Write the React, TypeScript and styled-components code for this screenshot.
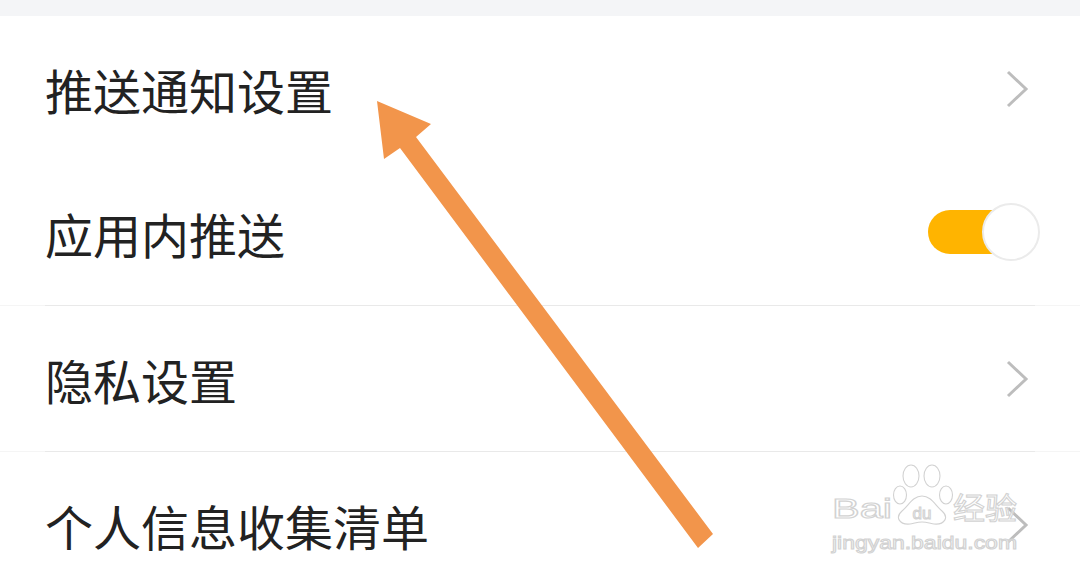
import React from 'react';
import styled, { createGlobalStyle } from 'styled-components';

const GlobalStyle = createGlobalStyle`
  html, body {
    margin: 0;
    padding: 0;
    background: #ffffff;
  }
  body {
    font-family: "Noto Sans CJK SC", "Noto Sans", sans-serif;
    overflow: hidden;
  }
`;

const Page = styled.div`
  position: relative;
  width: 1080px;
  height: 583px;
  overflow: hidden;
  background: #ffffff;
`;

const TopBand = styled.div`
  height: 16px;
  background: #f4f5f7;
`;

const List = styled.div`
  display: flex;
  flex-direction: column;
`;

const Row = styled.div<{ $h: number; $right: number }>`
  display: flex;
  align-items: center;
  justify-content: space-between;
  height: ${p => p.$h}px;
  padding: 0 ${p => p.$right}px 0 45px;
  box-sizing: border-box;
`;

const Label = styled.span`
  font-size: 48px;
  line-height: 1;
  color: #222222;
`;

const Divider = styled.div`
  height: 1px;
  background: linear-gradient(
    to right,
    #f5f5f5 45px,
    #e9e9e9 45px,
    #e9e9e9 calc(100% - 45px),
    #f5f5f5 calc(100% - 45px)
  );
`;

const ChevronIcon = styled.svg`
  width: 24px;
  height: 42px;
  display: block;
`;

const Chevron = () => (
  <ChevronIcon viewBox="0 0 24 42">
    <polyline points="2,4 20,21 2,38" fill="none" stroke="#bdbdbd" strokeWidth="3" strokeLinejoin="miter" />
  </ChevronIcon>
);

const Toggle = styled.div`
  position: relative;
  width: 112px;
  height: 60px;
`;

const Track = styled.div`
  position: absolute;
  left: 0;
  top: 7px;
  width: 90px;
  height: 44px;
  border-radius: 22px;
  background: #ffb400;
`;

const Knob = styled.div`
  position: absolute;
  right: 0;
  top: 0;
  width: 58px;
  height: 58px;
  border-radius: 50%;
  background: #ffffff;
  border: 2px solid #ebebeb;
  box-sizing: border-box;
`;

const ArrowLayer = styled.svg`
  position: absolute;
  left: 0;
  top: 0;
  width: 1080px;
  height: 583px;
  pointer-events: none;
`;

const WatermarkLogo = styled.svg`
  position: absolute;
  left: 828px;
  top: 462px;
  width: 196px;
  height: 96px;
  pointer-events: none;
`;

// stretched outline lettering of the jingyan watermark
const Watermark = () => (
  <WatermarkLogo viewBox="0 0 196 96">
    <g fill="rgba(255,255,255,0.55)" stroke="#d2d2d2" strokeWidth="1.1">
      <text x="4" y="56" fontFamily="Liberation Sans, Arial, sans-serif" fontSize="28" textLength="60" lengthAdjust="spacingAndGlyphs">Bai</text>
      <ellipse cx="83" cy="14" rx="8" ry="11" />
      <ellipse cx="104" cy="14" rx="8" ry="11" />
      <ellipse cx="72" cy="33" rx="6.5" ry="9" />
      <ellipse cx="118" cy="33" rx="6.5" ry="9" />
      <path d="M94 34 C85 34 81 43 74 49 C67 55 71 63 82 62 C87 61 90 60 94 60 C98 60 101 61 106 62 C117 63 121 55 114 49 C107 43 103 34 94 34 Z" />
      <text x="94" y="57" textAnchor="middle" fontFamily="Liberation Sans, Arial, sans-serif" fontSize="17">du</text>
      <text x="125" y="57" fontFamily="Noto Sans CJK SC, sans-serif" fontSize="30" textLength="64" lengthAdjust="spacingAndGlyphs">经验</text>
      <text x="4" y="87" fontFamily="Liberation Sans, Arial, sans-serif" fontSize="19" textLength="185" lengthAdjust="spacingAndGlyphs">jingyan.baidu.com</text>
    </g>
  </WatermarkLogo>
);

const App = () => {
  return (
    <Page>
      <GlobalStyle />
      <TopBand />
      <List>
        <Row $h={145} $right={50}>
          <Label>推送通知设置</Label>
          <Chevron />
        </Row>
        <Row $h={144} $right={40}>
          <Label>应用内推送</Label>
          <Toggle>
            <Track />
            <Knob />
          </Toggle>
        </Row>
        <Divider />
        <Row $h={145} $right={50}>
          <Label>隐私设置</Label>
          <Chevron />
        </Row>
        <Divider />
        <Row $h={146} $right={50}>
          <Label>个人信息收集清单</Label>
          <Chevron />
        </Row>
      </List>

      <Watermark />

      <ArrowLayer viewBox="0 0 1080 583">
        <polygon
          points="377,101 431,124 416,137 713,534 698,548 400,148 384,159"
          fill="#f2954b"
        />
      </ArrowLayer>
    </Page>
  );
};

export default App;
